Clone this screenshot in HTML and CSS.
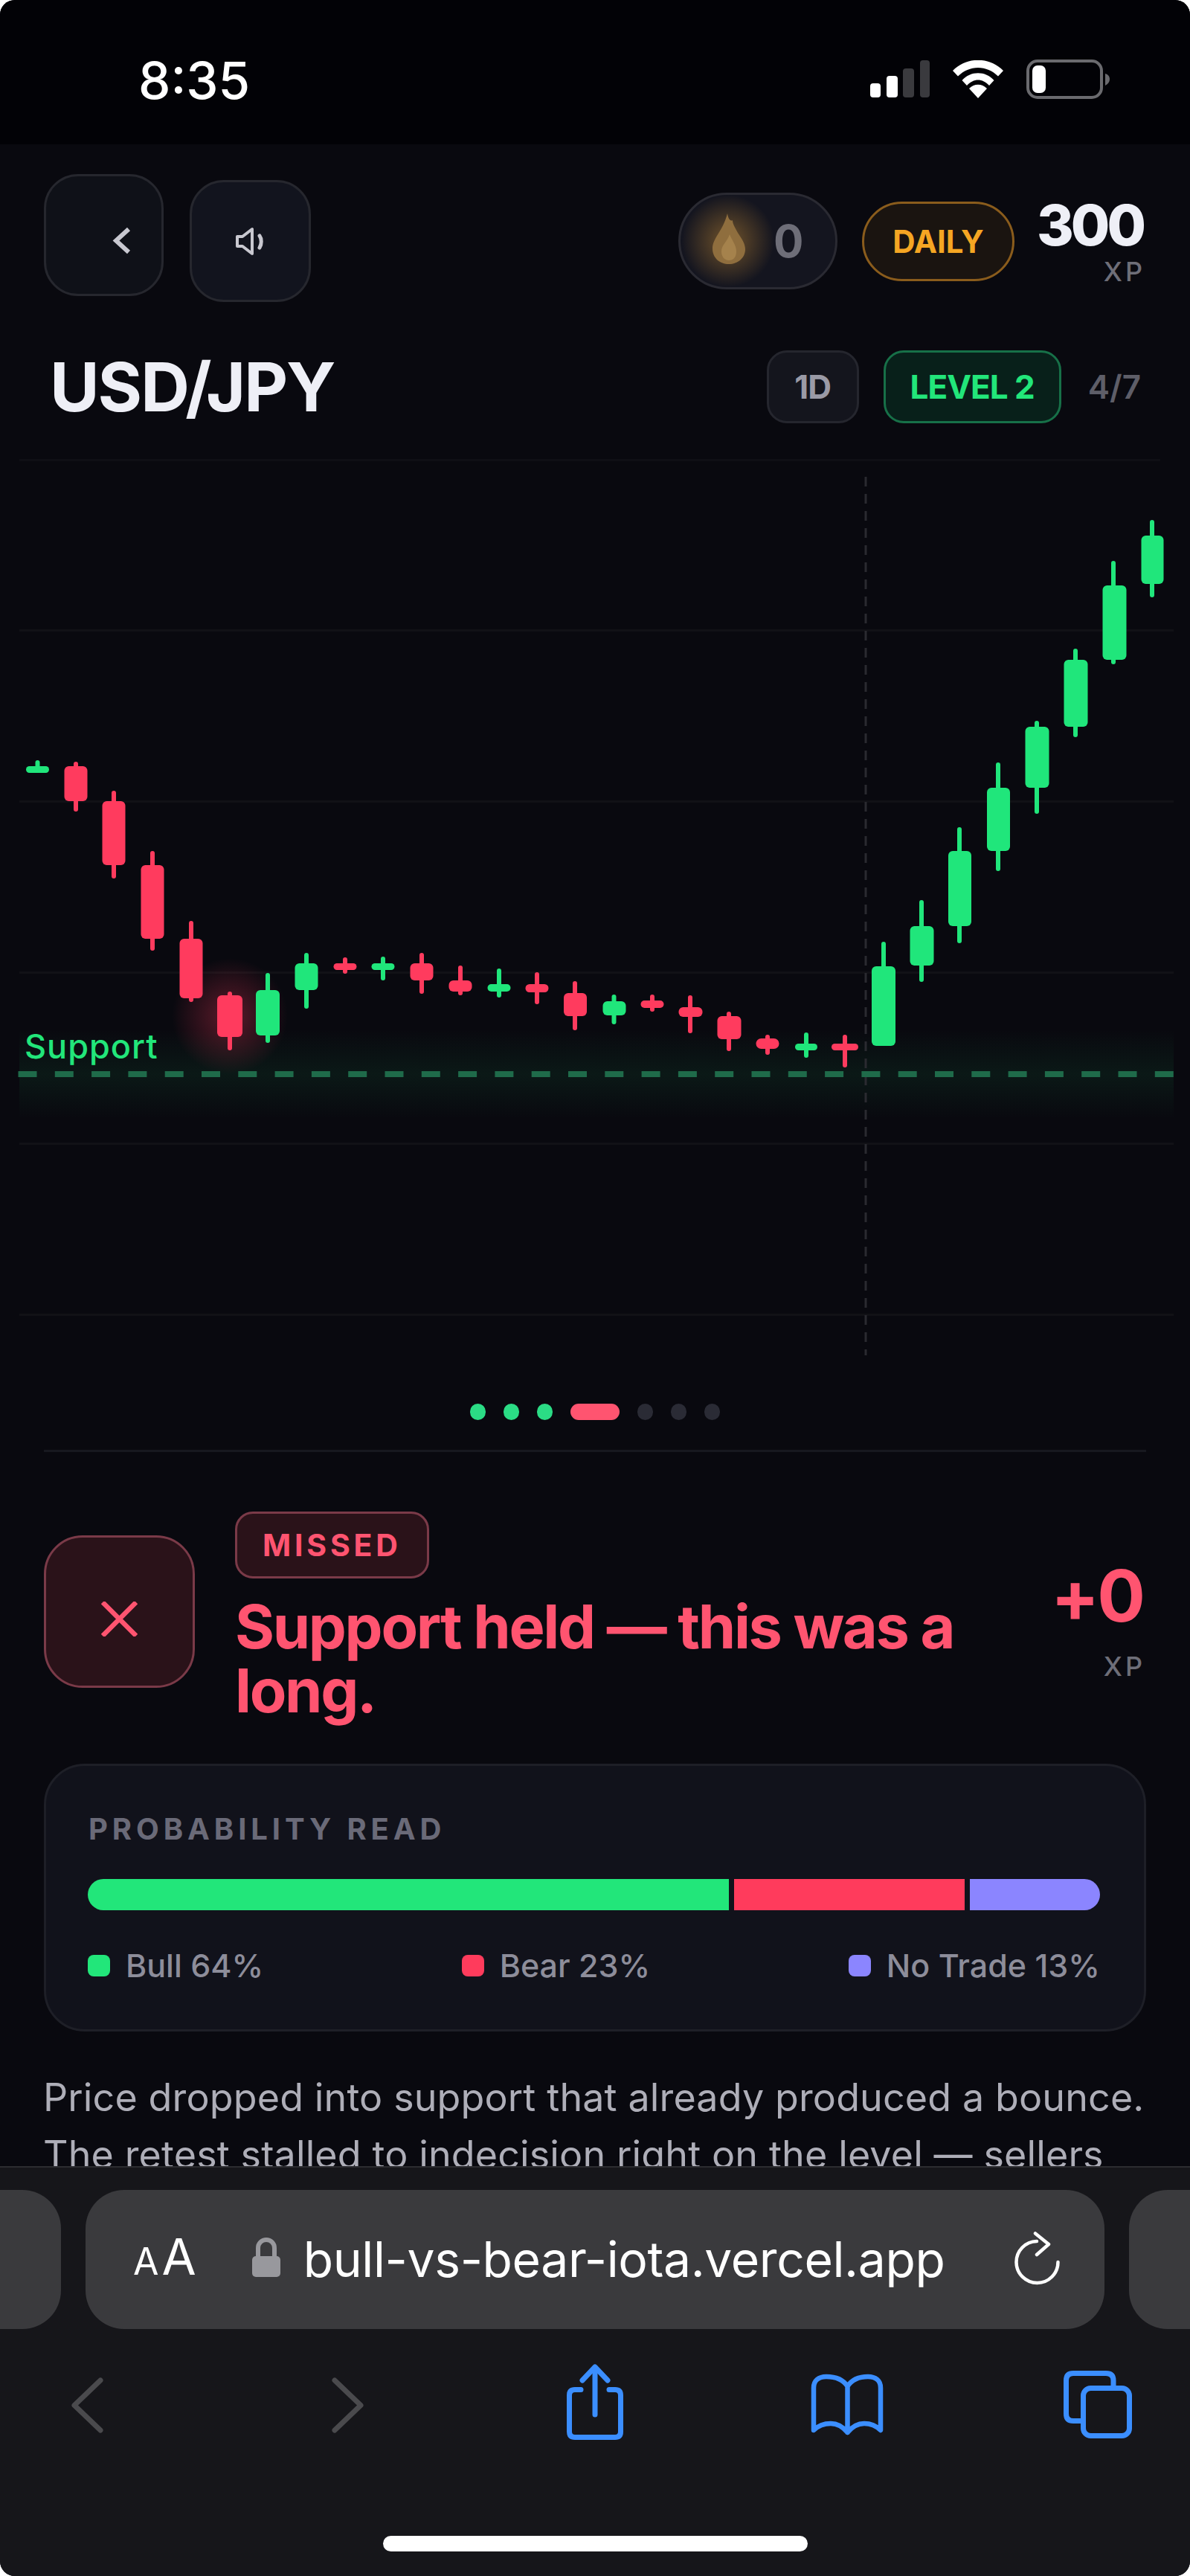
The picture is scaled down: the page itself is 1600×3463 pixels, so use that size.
FILE: index.html
```html
<!DOCTYPE html>
<html lang="en">
<head>
  <meta charset="UTF-8" />
  <meta name="viewport" content="width=device-width, initial-scale=1.0" />
  <title>Bull vs Bear</title>
  <link rel="stylesheet" href="styles.css">
</head>
<body>
<div class="screen">

  <!-- phone status bar -->
  <div class="statusbar">
    <span class="clock">8:35</span>
    <svg class="signal" width="80" height="50" viewBox="0 0 80 50">
      <rect x="0" y="31" width="14" height="19" rx="4" fill="#fff"/>
      <rect x="22" y="21" width="15" height="29" rx="4" fill="#fff"/>
      <rect x="44" y="11" width="15" height="39" rx="4" fill="#3a3a3e"/>
      <rect x="67" y="0" width="13" height="50" rx="4" fill="#3a3a3e"/>
    </svg>
    <svg class="wifi" width="68" height="51" viewBox="0 0 68 51" fill="#fff">
      <path d="M0 14C19-5 49-5 68 14L61 21.5C46 6 22 6 7 21.5Z"/>
      <path d="M12.5 27C24 14 44 14 55.5 27L49 34C40 24 28 24 19 34Z"/>
      <path d="M34 51L22 38C29 31 39 31 46 38Z"/>
    </svg>
    <svg class="battery" width="112" height="53" viewBox="0 0 112 53">
      <rect x="2" y="2" width="99" height="49" rx="13" fill="none" stroke="#6a6a6e" stroke-width="4"/>
      <rect x="8" y="8" width="18" height="37" rx="7" fill="#fff"/>
      <path d="M106 19C110 20 112 23 112 26.5C112 30 110 33 106 35Z" fill="#6a6a6e"/>
    </svg>
  </div>

  <div class="app">
    <div class="topbar">
      <button class="icon-btn back-btn">
        <svg width="26" height="37" viewBox="0 0 26 37"><path d="M23 3L6 18.5L23 34" fill="none" stroke="#c8c8d0" stroke-width="6"/></svg>
      </button>
      <button class="icon-btn sound-btn">
        <svg width="40" height="39" viewBox="0 0 40 39" fill="none" stroke="#c8c8d0" stroke-width="4">
          <path d="M2 13H9L22 3V36L9 26H2Z" stroke-linejoin="round"/>
          <path d="M32 12C35 16 35 23 32 28" stroke-width="5" stroke-linecap="round"/>
        </svg>
      </button>
      <div class="topbar-right">
        <div class="streak">
          <svg width="44" height="68" viewBox="0 0 44 68">
            <path d="M20 0C21 7 24 11 27 9C27 14 30 18 34 26C40 35 44 41 44 48C44 60 34 68 22 68C10 68 0 60 0 47C0 33 14 24 20 0Z" fill="#8f6e3e"/>
            <path d="M23 28C26 36 32 42 32 51C32 59 28 63 22 63C16 63 12 58 12 51C12 42 20 38 23 28Z" fill="#a5824c"/>
          </svg>
          <span class="streak-num">0</span>
        </div>
        <div class="daily">DAILY</div>
        <div class="xp-total">
          <div class="xp-num">300</div>
          <div class="xp-label">XP</div>
        </div>
      </div>
    </div>

    <div class="pair-row">
      <h1 class="pair">USD/JPY</h1>
      <div class="pair-tags">
        <span class="tag tag-time">1D</span>
        <span class="tag tag-level">LEVEL 2</span>
        <span class="count">4/7</span>
      </div>
    </div>

    <!-- chart: viewBox follows page y so candle numbers read like the screenshot -->
    <svg class="chart" width="1600" height="1260" viewBox="0 600 1600 1260">
      <defs>
        <linearGradient id="supportGlow" x1="0" y1="0" x2="0" y2="1">
          <stop offset="0" stop-color="#22e67a" stop-opacity="0"/>
          <stop offset="0.5" stop-color="#22e67a" stop-opacity="0.07"/>
          <stop offset="1" stop-color="#22e67a" stop-opacity="0"/>
        </linearGradient>
        <radialGradient id="missGlow">
          <stop offset="0" stop-color="#ff3b5e" stop-opacity="0.34"/>
          <stop offset="1" stop-color="#ff3b5e" stop-opacity="0"/>
        </radialGradient>
      </defs>

      <g fill="#111116">
        <rect x="26" y="617" width="1534" height="3" fill="#0f0f15"/>
        <rect x="26" y="846" width="1552" height="3"/>
        <rect x="26" y="1076" width="1552" height="3"/>
        <rect x="26" y="1306" width="1552" height="3"/>
        <rect x="26" y="1536" width="1552" height="3"/>
        <rect x="26" y="1766" width="1552" height="3"/>
      </g>

      <rect x="26" y="1384" width="1552" height="120" fill="url(#supportGlow)"/>
      <circle cx="309" cy="1366" r="78" fill="url(#missGlow)"/>
      <line x1="1164" y1="641" x2="1164" y2="1822" stroke="#2a2a30" stroke-width="3" stroke-dasharray="13 10"/>
      <line x1="24.5" y1="1444" x2="1578" y2="1444" stroke="#1f6b4a" stroke-width="8" stroke-dasharray="25 24.3"/>
      <text class="support-label" x="33" y="1423">Support</text>

      <g class="red">
        <rect x="99" y="1024" width="6" height="67" rx="3"/><rect x="86.5" y="1030" width="31" height="47" rx="6"/>
        <rect x="150" y="1063" width="6" height="118" rx="3"/><rect x="137.5" y="1077" width="31" height="86" rx="6"/>
        <rect x="202" y="1144" width="6" height="134" rx="3"/><rect x="189.5" y="1163" width="31" height="99" rx="6"/>
        <rect x="254" y="1238" width="6" height="109" rx="3"/><rect x="241.5" y="1262" width="31" height="80" rx="6"/>
        <rect x="306" y="1333" width="6" height="79" rx="3"/><rect x="292" y="1338" width="34" height="56" rx="6"/>
        <rect x="461" y="1287" width="6" height="22" rx="3"/><rect x="448.5" y="1295" width="31" height="9" rx="4.5"/>
        <rect x="564" y="1281" width="6" height="55" rx="3"/><rect x="551.5" y="1295" width="31" height="23" rx="6"/>
        <rect x="616" y="1298" width="6" height="40" rx="3"/><rect x="603.5" y="1318" width="31" height="15" rx="6"/>
        <rect x="719" y="1307" width="6" height="43" rx="3"/><rect x="706.5" y="1323" width="31" height="11" rx="5.5"/>
        <rect x="770" y="1319" width="6" height="66" rx="3"/><rect x="758" y="1335" width="31" height="31" rx="6"/>
        <rect x="874" y="1337" width="6" height="23" rx="3"/><rect x="861.5" y="1345" width="31" height="10" rx="5"/>
        <rect x="925" y="1338" width="6" height="51" rx="3"/><rect x="912.5" y="1354" width="32" height="13" rx="6"/>
        <rect x="977" y="1360" width="6" height="53" rx="3"/><rect x="964.5" y="1366" width="32" height="31" rx="6"/>
        <rect x="1029" y="1391" width="6" height="27" rx="3"/><rect x="1016.5" y="1396" width="31" height="14" rx="7"/>
        <rect x="1133" y="1391" width="6" height="44" rx="3"/><rect x="1118" y="1403" width="36" height="9" rx="4.5"/>
      </g>
      <g class="green">
        <rect x="47.5" y="1022" width="6" height="17" rx="3"/><rect x="35" y="1030" width="31" height="9" rx="4.5"/>
        <rect x="357" y="1308" width="6" height="94" rx="3"/><rect x="344" y="1331" width="32" height="61" rx="6"/>
        <rect x="409" y="1281" width="6" height="75" rx="3"/><rect x="396.5" y="1295" width="31" height="36" rx="6"/>
        <rect x="512" y="1286" width="6" height="32" rx="3"/><rect x="499.5" y="1295" width="31" height="9" rx="4.5"/>
        <rect x="668" y="1302" width="6" height="39" rx="3"/><rect x="655.5" y="1323" width="31" height="10" rx="5"/>
        <rect x="822.5" y="1337" width="6" height="40" rx="3"/><rect x="810.5" y="1346" width="31" height="19" rx="6"/>
        <rect x="1081" y="1388" width="6" height="34" rx="3"/><rect x="1069" y="1403" width="30" height="9" rx="4.5"/>
        <rect x="1185" y="1266" width="6" height="40" rx="3"/><rect x="1172" y="1299" width="32" height="107" rx="6"/>
        <rect x="1236" y="1210" width="6" height="110" rx="3"/><rect x="1223.5" y="1245" width="32" height="53" rx="6"/>
        <rect x="1287" y="1112" width="6" height="156" rx="3"/><rect x="1275" y="1144" width="31" height="101" rx="6"/>
        <rect x="1339" y="1025" width="6" height="146" rx="3"/><rect x="1327" y="1059" width="31" height="85" rx="6"/>
        <rect x="1391" y="969" width="6" height="125" rx="3"/><rect x="1378.5" y="977" width="32" height="82" rx="6"/>
        <rect x="1443" y="872" width="6" height="119" rx="3"/><rect x="1430.5" y="887" width="32" height="90" rx="6"/>
        <rect x="1494" y="754" width="6" height="139" rx="3"/><rect x="1482.5" y="787" width="32" height="100" rx="6"/>
        <rect x="1546" y="699" width="6" height="104" rx="3"/><rect x="1534.5" y="720" width="30" height="65" rx="6"/>
      </g>
    </svg>

    <div class="steps">
      <span class="step done"></span>
      <span class="step done"></span>
      <span class="step done"></span>
      <span class="step current"></span>
      <span class="step"></span>
      <span class="step"></span>
      <span class="step"></span>
    </div>

    <div class="divider"></div>

    <div class="result">
      <div class="result-icon">
        <svg width="49" height="47" viewBox="0 0 49 47"><path d="M2 1L47 46M47 1L2 46" stroke="#ff5470" stroke-width="6.5" fill="none"/></svg>
      </div>
      <div class="result-text">
        <span class="badge">MISSED</span>
        <h2 class="headline">Support held — this was a long.</h2>
      </div>
      <div class="result-xp">
        <div class="gain">+0</div>
        <div class="xp-label">XP</div>
      </div>
    </div>

    <div class="prob-card">
      <div class="prob-title">PROBABILITY READ</div>
      <div class="prob-bar">
        <div class="seg seg-bull" style="flex: 64"></div>
        <div class="seg seg-bear" style="flex: 23"></div>
        <div class="seg seg-none" style="flex: 13"></div>
      </div>
      <div class="legend">
        <span class="legend-item"><i class="swatch seg-bull"></i>Bull 64%</span>
        <span class="legend-item"><i class="swatch seg-bear"></i>Bear 23%</span>
        <span class="legend-item"><i class="swatch seg-none"></i>No Trade 13%</span>
      </div>
    </div>

    <p class="explain">Price dropped into support that already produced a bounce. The retest stalled to indecision right on the level — sellers</p>
  </div>

  <!-- safari toolbar -->
  <div class="toolbar">
    <div class="url-row">
      <div class="tab-peek tab-left"></div>
      <div class="url-pill">
        <span class="aa"><span class="aa-small">A</span><span class="aa-big">A</span></span>
        <svg class="lock" width="38" height="53" viewBox="0 0 38 53">
          <path d="M8 27V14A11 11 0 0 1 30 14V27" fill="none" stroke="#98989d" stroke-width="6"/>
          <rect x="0" y="25" width="38" height="28" rx="5" fill="#98989d"/>
        </svg>
        <span class="url">bull-vs-bear-iota.vercel.app</span>
        <svg class="reload" width="61" height="73" viewBox="0 0 61 73" fill="none" stroke="#fff" stroke-width="4.5" stroke-linecap="round" stroke-linejoin="round">
          <path d="M30 13A28 28 0 1 0 58.5 41"/>
          <path d="M28 2.5L46 17L30 31"/>
        </svg>
      </div>
      <div class="tab-peek tab-right"></div>
    </div>
    <div class="nav-row">
      <svg width="120" height="120" viewBox="0 0 120 120" fill="none" stroke="#4a4a4d" stroke-width="7" stroke-linecap="round" stroke-linejoin="round">
        <path d="M77 30L42 63.5L77 97"/>
      </svg>
      <svg width="120" height="120" viewBox="0 0 120 120" fill="none" stroke="#4a4a4d" stroke-width="7" stroke-linecap="round" stroke-linejoin="round">
        <path d="M52 30L87 63.5L52 97"/>
      </svg>
      <svg width="120" height="120" viewBox="0 0 120 120" fill="none" stroke="#3b8eff" stroke-width="7" stroke-linecap="round" stroke-linejoin="round">
        <path d="M44 42.5H36Q28.5 42.5 28.5 50V99Q28.5 106.5 36 106.5H90Q97.5 106.5 97.5 99V50Q97.5 42.5 90 42.5H82"/>
        <path d="M63 76V14"/>
        <path d="M46 30L63 12L80 30"/>
      </svg>
      <svg width="120" height="120" viewBox="0 0 120 120" fill="none" stroke="#3b8eff" stroke-width="6.5" stroke-linecap="round" stroke-linejoin="round">
        <path d="M62.5 38C56 28 46 25 34 25C24 25 17 30 17 40V97C24 90 32 88 40 88C48 88 56 92 62.5 100C69 92 77 88 85 88C93 88 100 90 107 97V40C107 30 100 25 90 25C78 25 69 28 62.5 38ZM62.5 38V100"/>
      </svg>
      <svg width="120" height="120" viewBox="0 0 120 120" fill="none" stroke="#3b8eff" stroke-width="7" stroke-linejoin="round">
        <path d="M81 37V30Q81 20.5 71 20.5H27Q17.5 20.5 17.5 30V75Q17.5 84.5 27 84.5H37"/>
        <rect x="40.5" y="40.5" width="62" height="64" rx="10"/>
      </svg>
    </div>
    <div class="home-bar"></div>
  </div>
</div>
</body>
</html>
```

FILE: styles.css
```css
* { box-sizing: border-box; }
html, body {
  margin: 0;
  background: #fff;
}
body { font-family: "Inter", "Liberation Sans", sans-serif; }
h1, h2, p { margin: 0; }

.screen {
  width: 1600px;
  height: 3463px;
  display: flex;
  flex-direction: column;
  overflow: hidden;
  border-radius: 20px;
  background: #09090f;
}

/* status bar */
.statusbar {
  height: 194px;
  flex: none;
  display: flex;
  align-items: flex-start;
  padding: 0 108px 0 186px;
  background: #020206;
  color: #fff;
}
.clock {
  margin-top: 66px;
  font-size: 69px;
  line-height: 84px;
  font-weight: 500;
}
.signal { margin: 81px 0 0 auto; }
.wifi { margin: 81px 0 0 31px; }
.battery { margin: 80px 0 0 31px; }

.app {
  flex: 1;
  min-height: 0;
  overflow: hidden;
  padding: 0 59px;
}

/* top row */
.topbar {
  display: flex;
  align-items: center;
  gap: 35px;
  height: 164px;
  margin-top: 48px;
}
.icon-btn {
  width: 163px;
  height: 164px;
  padding: 0;
  display: flex;
  align-items: center;
  justify-content: center;
  border: 3px solid #26272e;
  border-radius: 46px;
  background: #12141e;
}
.back-btn {
  width: 161px;
  background: #0f1118;
  transform: translateY(-8px);
}
.back-btn svg { margin: 15px 0 0 46px; }
.topbar-right {
  display: flex;
  align-items: center;
  margin: 0 4px 0 auto;
}
.streak {
  width: 214px;
  height: 130px;
  display: flex;
  align-items: center;
  padding-left: 46px;
  border: 3px solid #2a2a32;
  border-radius: 65px;
  background: radial-gradient(circle 62px at 64px 62px, rgba(205, 145, 55, 0.5), rgba(205, 145, 55, 0)), #14151f;
}
.streak svg { margin: -6px 0 0 -3px; }
.streak-num {
  margin-left: 38px;
  font-size: 60px;
  font-weight: 700;
  color: #6e6e78;
}
.daily {
  width: 205px;
  height: 107px;
  margin-left: 33px;
  display: flex;
  align-items: center;
  justify-content: center;
  border: 3px solid #8a5c1c;
  border-radius: 54px;
  background: #1a1410;
  color: #f5a623;
  font-size: 42px;
  font-weight: 700;
}
.xp-total {
  margin-left: 30px;
  text-align: right;
}
.xp-num {
  font-size: 76px;
  line-height: 82px;
  font-weight: 800;
  letter-spacing: -4px;
  color: #eeeff6;
}
.xp-label {
  font-size: 36px;
  line-height: 44px;
  font-weight: 500;
  letter-spacing: 4px;
  margin-right: -3px;
  color: #6e6e78;
}

/* pair row */
.pair-row {
  display: flex;
  align-items: center;
  justify-content: space-between;
  height: 98px;
  margin-top: 65px;
  padding: 0 7px 0 8px;
}
.pair {
  font-size: 91px;
  font-weight: 700;
  letter-spacing: -2px;
  color: #eeeff6;
}
.pair-tags {
  display: flex;
  align-items: center;
}
.tag {
  height: 98px;
  display: flex;
  align-items: center;
  justify-content: center;
  border-radius: 27px;
  font-size: 44px;
  font-weight: 700;
  letter-spacing: -1px;
}
.tag-time {
  width: 124px;
  border: 3px solid #25262e;
  background: #14151d;
  color: #9a9aa6;
}
.tag-level {
  width: 239px;
  margin-left: 33px;
  border: 3px solid #177048;
  background: #08201a;
  color: #22e67a;
}
.count {
  margin-left: 36px;
  font-size: 44px;
  font-weight: 600;
  color: #5e5e68;
}

/* chart */
.chart {
  display: block;
  margin: 31px -59px 0;
}
.chart .red { fill: #ff3b5e; }
.chart .green { fill: #20e67b; }
.support-label {
  font-size: 45px;
  font-weight: 500;
  letter-spacing: 1px;
  fill: #22e67a;
}

.steps {
  display: flex;
  justify-content: center;
  gap: 24px;
  margin-top: 27px;
}
.step {
  width: 21px;
  height: 22px;
  border-radius: 11px;
  background: #2a2b35;
}
.step.done { background: #2bdc85; }
.step.current {
  width: 66px;
  background: #ff5470;
}

.divider {
  height: 3px;
  margin-top: 40px;
  background: #17181f;
}

/* result */
.result {
  display: flex;
  align-items: flex-start;
  margin-top: 80px;
}
.result-icon {
  width: 203px;
  height: 205px;
  flex: none;
  margin-top: 32px;
  display: flex;
  align-items: center;
  justify-content: center;
  border: 3px solid #7a3a48;
  border-radius: 52px;
  background: #2a1219;
}
.result-icon svg { margin-top: 20px; }
.result-text {
  flex: 1;
  margin-left: 54px;
}
.badge {
  display: inline-flex;
  align-items: center;
  height: 90px;
  padding: 0 34px;
  border: 3px solid #7a3a48;
  border-radius: 24px;
  background: #2a1219;
  color: #ff5470;
  font-size: 41px;
  font-weight: 700;
  letter-spacing: 4.8px;
}
.headline {
  margin-top: 22px;
  font-size: 81px;
  line-height: 86px;
  font-weight: 700;
  letter-spacing: -2.3px;
  color: #ff5470;
}
.result-xp {
  flex: none;
  margin: 58px 4px 0 40px;
  text-align: right;
}
.gain {
  font-size: 96px;
  line-height: 110px;
  font-weight: 700;
  letter-spacing: -3px;
  color: #ff5470;
}
.result-xp .xp-label { margin-top: 18px; }

/* probability card */
.prob-card {
  margin-top: 55px;
  padding: 60px 59px 64px;
  border: 3px solid #1e1f27;
  border-radius: 55px;
  background: #11121b;
}
.prob-title {
  margin-left: -2px;
  font-size: 40px;
  line-height: 50px;
  font-weight: 700;
  letter-spacing: 5.9px;
  color: #6a6a78;
}
.prob-bar {
  display: flex;
  gap: 7px;
  height: 42px;
  margin: 42px 0 0 -3px;
  border-radius: 21px;
  overflow: hidden;
}
.seg-bull { background: #22e67a; }
.seg-bear { background: #ff3b5c; }
.seg-none { background: #8b85ff; }
.legend {
  display: flex;
  justify-content: space-between;
  margin: 52px 0 0 -3px;
}
.legend-item {
  display: flex;
  align-items: center;
  font-size: 43px;
  line-height: 44px;
  font-weight: 500;
  color: #8d8d9a;
}
.swatch {
  width: 30px;
  height: 29px;
  margin-right: 21px;
  border-radius: 8px;
}

.explain {
  margin: 50px -4px 0 -1px;
  font-size: 52px;
  line-height: 77px;
  letter-spacing: 0.13px;
  color: #aeaeb8;
}

/* browser toolbar */
.toolbar {
  height: 551px;
  flex: none;
  border-top: 2px solid #2c2c30;
  background: #16161a;
}
.url-row {
  display: flex;
  gap: 33px;
  height: 187px;
  margin-top: 30px;
}
.tab-peek {
  width: 82px;
  background: #3a3a3d;
}
.tab-left { border-radius: 0 52px 52px 0; }
.tab-right { border-radius: 52px 0 0 52px; }
.url-pill {
  flex: 1;
  display: flex;
  align-items: center;
  padding: 0 60px 0 64px;
  border-radius: 52px;
  background: #3a3a3d;
  color: #fff;
}
.aa {
  display: flex;
  align-items: baseline;
  margin-top: -2px;
  font-weight: 400;
  line-height: 80px;
}
.aa-small { font-size: 50px; margin-right: 4px; }
.aa-big { font-size: 67px; }
.lock { margin: -6px 0 0 75px; }
.url {
  margin: -2px 0 0 31px;
  font-size: 66px;
  line-height: 90px;
  letter-spacing: -0.4px;
  white-space: nowrap;
}
.reload { margin: -2px 0 0 auto; }
.nav-row {
  display: flex;
  justify-content: space-between;
  height: 120px;
  margin-top: 39px;
  padding: 0 64px 0 58px;
}
.home-bar {
  width: 571px;
  height: 21px;
  margin: 119px 0 0 515px;
  border-radius: 11px;
  background: #fff;
}
```
